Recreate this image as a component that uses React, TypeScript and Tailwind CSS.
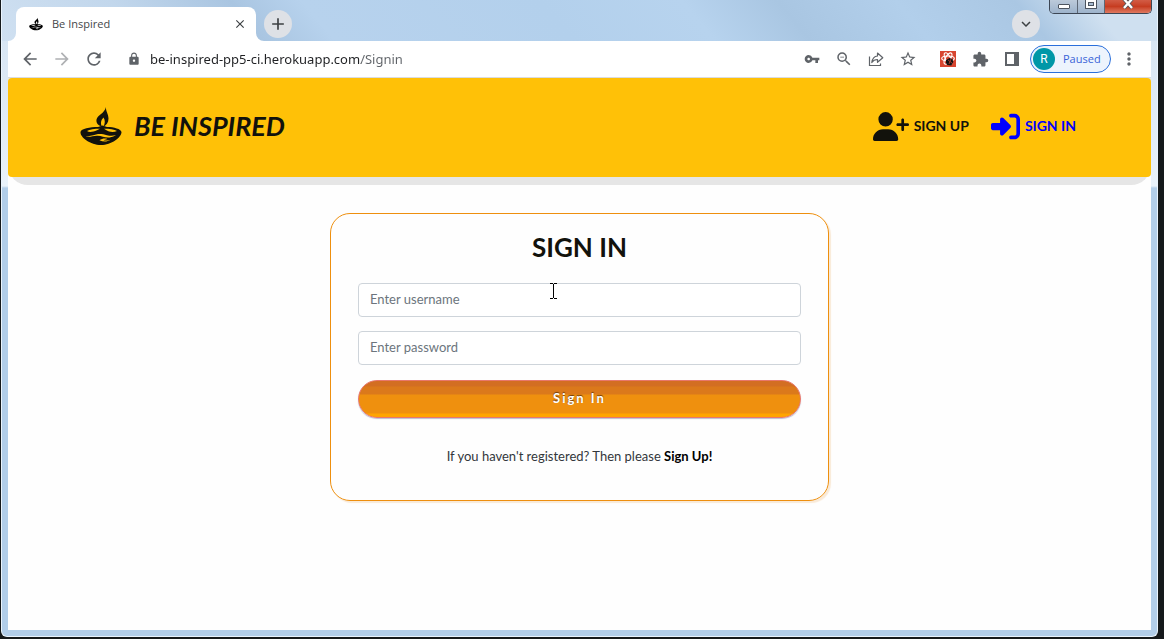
import type { ReactNode } from "react";
import {
  MdAdd, MdArrowBack, MdArrowForward, MdClose, MdExtension, MdKeyboardArrowDown,
  MdLock, MdMoreVert, MdRefresh, MdStarBorder, MdVpnKey, MdZoomOut,
} from "react-icons/md";
import { FaRightToBracket, FaUserPlus } from "react-icons/fa6";

function Diya({ className }: { className: string }) {
  return (
    <svg viewBox="0 0 42 38" className={className} fill="currentColor" aria-hidden="true">
      <path d="M26 0C25.500 4 28.500 7 28.500 11.500C28.500 15.500 26.500 18 23.500 19.500C25 16.500 25.500 13.500 23.500 10.500C20.500 13.500 20.500 17 22 19.500C18 18.500 16 16 16.500 12.500C17.500 8 24.500 6.500 26 0Z" />
      <path
        fillRule="evenodd"
        d="M0.500 25C1 21.500 10 20 18 20L22.500 18.500L27 20C34 20 41 22 41.500 25C41.500 30.500 31.500 38 21 38C10.500 38 0 30.500 0.500 25ZM7 24C9 25.500 13 25 17 23.300L20 21.800C14.500 21.800 9.500 22.400 7 24ZM24 21.800L26 23C29 25.300 34 25.500 37 24C34.500 22.400 29.500 21.800 24 21.800ZM5.500 29.500C10 30.700 13 28.600 17.500 28.800C22 29 25 31 29.500 30.500C32.500 30.200 34.500 29 36 28C33 28.900 30.500 29 27 28.200C23 27.200 20 26.700 16 27.500C12 28.300 9 29.500 5.500 29.500ZM19.500 33.300C22 31.300 25.500 31.300 27.500 32L23.500 33.300C26 33.800 28.500 33.600 30.500 32.800C27 35.200 23 35 19.500 33.300Z"
      />
    </svg>
  );
}

function ShareIcon() {
  return (
    <svg viewBox="0 0 16 16" className="size-4" fill="none" stroke="currentColor" strokeWidth="1.200" aria-hidden="true">
      <path d="M1.500 5.500v9h11V12.500" />
      <path d="M9.500 5V2l5.300 4.700-5.300 4.600V8.500C6.500 8.500 5 9.500 3.800 11.500 4.300 8 6 5.300 9.500 5Z" strokeLinejoin="round" />
    </svg>
  );
}

function AtomExtension() {
  return (
    <svg viewBox="0 0 16 16" className="size-4" aria-hidden="true">
      <path fill="#d7452f" d="M0 0h16v16H0z" />
      <g fill="none" stroke="#fff" strokeWidth="1.100">
        <ellipse cx="8" cy="7.500" rx="6.300" ry="2.500" />
        <ellipse cx="8" cy="7.500" rx="6.300" ry="2.500" transform="rotate(60 8 7.500)" />
        <ellipse cx="8" cy="7.500" rx="6.300" ry="2.500" transform="rotate(120 8 7.500)" />
      </g>
      <path fill="#111" d="M6 9 9.500 7l3 1 .8 3-2 3.500-4-.5-1.300-2z" />
      <path stroke="#d7452f" strokeWidth=".7" d="m8 9 4 3M11 8l-2 5" />
    </svg>
  );
}

function TextCursor() {
  return (
    <svg viewBox="0 0 7 16" className="pointer-events-none absolute top-[69px] left-[219px] h-4 w-[7px]" fill="none" stroke="#000" shapeRendering="crispEdges" aria-hidden="true">
      <path d="M0 .5h3M4 .5h3M3.500 1v14M0 15.500h3M4 15.500h3" />
    </svg>
  );
}

function IconButton({ label, className = "", children }: { label: string; className?: string; children: ReactNode }) {
  return (
    <button type="button" aria-label={label} className={`flex size-8 shrink-0 items-center justify-center text-[#5f6368] ${className}`}>
      {children}
    </button>
  );
}

function WindowControls() {
  return (
    <div className="-mr-px flex h-[14px] w-[103px] self-start overflow-hidden rounded-b-[5px] border border-t-0 border-[#3c4654]">
      <button type="button" aria-label="Minimize" className="flex w-7 items-center justify-center border-r border-[#5d6876] bg-linear-to-b from-[#bccada] to-[#9db3cb]">
        <span className="h-[5px] w-3 rounded-[1px] border border-[#4d5560] bg-white" />
      </button>
      <button type="button" aria-label="Maximize" className="flex w-[27px] justify-center border-r border-[#5d6876] bg-linear-to-b from-[#bccada] to-[#9db3cb]">
        <span className="flex h-[9px] w-3 items-center justify-center rounded-b-[1px] border border-t-0 border-[#4d5560] bg-white">
          <span className="h-1 w-[6px] border border-[#4d5560] bg-[#a9bdd3]" />
        </span>
      </button>
      <button type="button" aria-label="Close window" className="flex flex-1 justify-center bg-linear-to-b from-[#d25c45] via-[#c63c20] to-[#df7960]">
        <svg viewBox="0 0 12 10" className="h-[10px] w-3" aria-hidden="true">
          <path d="M2-1 10 8M10-1 2 8" stroke="#53535b" strokeWidth="4" />
          <path d="M2-1 10 8M10-1 2 8" stroke="#fff" strokeWidth="2.400" />
        </svg>
      </button>
    </div>
  );
}

function TabStrip() {
  return (
    <header className="flex h-[41px] items-end">
      <svg viewBox="0 0 8 8" className="size-2 text-white" fill="currentColor" aria-hidden="true"><path d="M8 0v8H0a8 8 0 0 0 8-8Z" /></svg>
      <div className="flex h-[34px] w-60 items-center rounded-t-lg bg-white pr-2 pl-[13px]">
        <Diya className="size-[14px] text-black" />
        <span className="ml-[9px] flex-1 font-['Open_Sans',sans-serif] text-[11px] text-[#45474a]">Be Inspired</span>
        <button type="button" aria-label="Close tab" className="flex size-4 items-center justify-center text-[#3c4043]">
          <MdClose className="size-[14px]" />
        </button>
      </div>
      <svg viewBox="0 0 8 8" className="size-2 text-white" fill="currentColor" aria-hidden="true"><path d="M0 0v8h8a8 8 0 0 1-8-8Z" /></svg>
      <button type="button" aria-label="New tab" className="mb-[3px] flex size-7 items-center justify-center rounded-full bg-[#dee1e6] text-[#3c4043]">
        <MdAdd className="size-5" />
      </button>
      <button type="button" aria-label="Search tabs" className="mr-[9px] mb-[3px] ml-auto flex size-7 items-center justify-center rounded-full bg-[#dee1e6] text-[#3c4043]">
        <MdKeyboardArrowDown className="size-[18px]" />
      </button>
      <WindowControls />
    </header>
  );
}

function Toolbar() {
  return (
    <div className="flex h-[37px] items-center border-b border-[#dadce0] bg-white px-[6px]">
      <IconButton label="Back"><MdArrowBack className="size-5" /></IconButton>
      <IconButton label="Forward" className="opacity-50"><MdArrowForward className="size-5" /></IconButton>
      <IconButton label="Reload"><MdRefresh className="size-5" /></IconButton>
      <span className="ml-3 flex size-6 shrink-0 items-center justify-center text-[#5f6368]"><MdLock className="size-[14px]" /></span>
      <input
        type="text"
        aria-label="Address"
        defaultValue="be-inspired-pp5-ci.herokuapp.com/Signin"
        className="ml-1 h-7 min-w-0 flex-1 bg-[linear-gradient(90deg,#202124_211px,#5f6368_211px)] bg-clip-text font-['Noto_Sans',sans-serif] text-[13px] text-transparent outline-none"
      />
      <IconButton label="Saved passwords"><MdVpnKey className="size-4" /></IconButton>
      <IconButton label="Zoom"><MdZoomOut className="size-[18px]" /></IconButton>
      <IconButton label="Share"><ShareIcon /></IconButton>
      <IconButton label="Bookmark"><MdStarBorder className="size-[18px]" /></IconButton>
      <IconButton label="Extension" className="ml-2"><AtomExtension /></IconButton>
      <IconButton label="Extensions"><MdExtension className="size-[17px]" /></IconButton>
      <IconButton label="Side panel">
        <span className="size-[14px] border-2 border-r-[5px] border-[#5f6368]" />
      </IconButton>
      <button type="button" className="mx-[2px] flex h-7 w-[81px] shrink-0 items-center gap-2 rounded-full border border-[#2a6fdb] bg-[#edf4fd] pl-[2px]">
        <span className="flex size-[22px] items-center justify-center rounded-full bg-[#0097a7] font-['Roboto',sans-serif] text-xs text-white">R</span>
        <span className="font-['Open_Sans',sans-serif] text-[11px] text-[#3a63d8]">Paused</span>
      </button>
      <IconButton label="Menu"><MdMoreVert className="size-5" /></IconButton>
    </div>
  );
}

function SiteHeader() {
  return (
    <div className="rounded-b-[20px] bg-[#e6e6e6] pb-2">
      <nav className="flex h-[99px] items-center justify-between rounded-[4px] bg-[#ffc107] pr-[75px] pb-[3px] pl-[72px] text-[#12120c]">
        <a href="#home" className="flex items-center gap-3">
          <Diya className="h-[38px] w-[42px]" />
          <span className="text-[27px] leading-8 font-bold italic">BE INSPIRED</span>
        </a>
        <div className="flex items-center gap-[22px] text-sm font-bold">
          <a href="#signup" className="flex items-center gap-[5px]"><FaUserPlus className="h-[29px] w-9" />SIGN UP</a>
          <a href="#signin" className="flex items-center gap-[5px] text-[#0000ff]"><FaRightToBracket className="size-[29px]" />SIGN IN</a>
        </div>
      </nav>
    </div>
  );
}

const fieldClass = "h-[34px] w-full rounded-[4px] border border-[#ced4da] bg-white px-[11px] pb-[2px] text-[13px] placeholder:text-[#6c757d] placeholder:opacity-100";

function SignInForm() {
  return (
    <form className="relative mx-auto mt-7 flex w-[499px] max-w-full flex-col items-center rounded-[20px] border border-[#ee8f0e] px-[27px] pt-[17px] pb-[34px] shadow-[2px_2px_1px_#f9ead8]">
      <h1 className="mb-5 text-[26px] leading-8 font-bold text-[#12120c]">SIGN IN</h1>
      <input type="text" aria-label="Username" placeholder="Enter username" className={fieldClass} />
      <input type="password" aria-label="Password" placeholder="Enter password" className={`mt-[14px] ${fieldClass}`} />
      <button type="button" className="mt-[15px] h-[38px] w-full rounded-full border border-[#e8776c] bg-[linear-gradient(#d36e22_0px,#d36e22_5px,#db791b_6px,#db791b_13px,#ef900e_14px,#ef900e_32px,#ffa500_33px)] pb-px text-[13px] font-bold tracking-[2px] text-white shadow-[0_1px_1px_#b9bed0] [text-shadow:0_-1px_1px_#6b3b10]">
        Sign In
      </button>
      <p className="mt-7 text-[13px] leading-5 text-[#33373b]">
        If you haven't registered? Then please <a href="#signup" className="font-bold text-black">Sign Up!</a>
      </p>
      <TextCursor />
    </form>
  );
}

export default function App() {
  return (
    <div className="flex min-h-screen flex-col bg-[#15191b] pr-[6px] pb-[2px] pl-px">
      <div className="flex flex-1 flex-col rounded-b-[6px] border-x border-b border-[#eaf4fd] bg-[linear-gradient(#d3e2f1,#e9f2fa_186px,#b2cee9_188px)] px-[6px] pb-[6px]">
        <div className="-mx-[6px] bg-[linear-gradient(50deg,#cfe0f1_0%,#c2d7ec_12%,#a9c5e1_22%,#b7d2ed_28%,#b3d0ec_48%,#b7d3ee_60%,#a9c6e2_68%,#b2cfeb_78%,#aac7e3_88%,#cfe0f0_94%)] px-[6px]">
          <TabStrip />
        </div>
        <Toolbar />
        <main className="flex-1 bg-[#fefefe] font-['Lato',sans-serif]">
          <SiteHeader />
          <SignInForm />
        </main>
      </div>
    </div>
  );
}
